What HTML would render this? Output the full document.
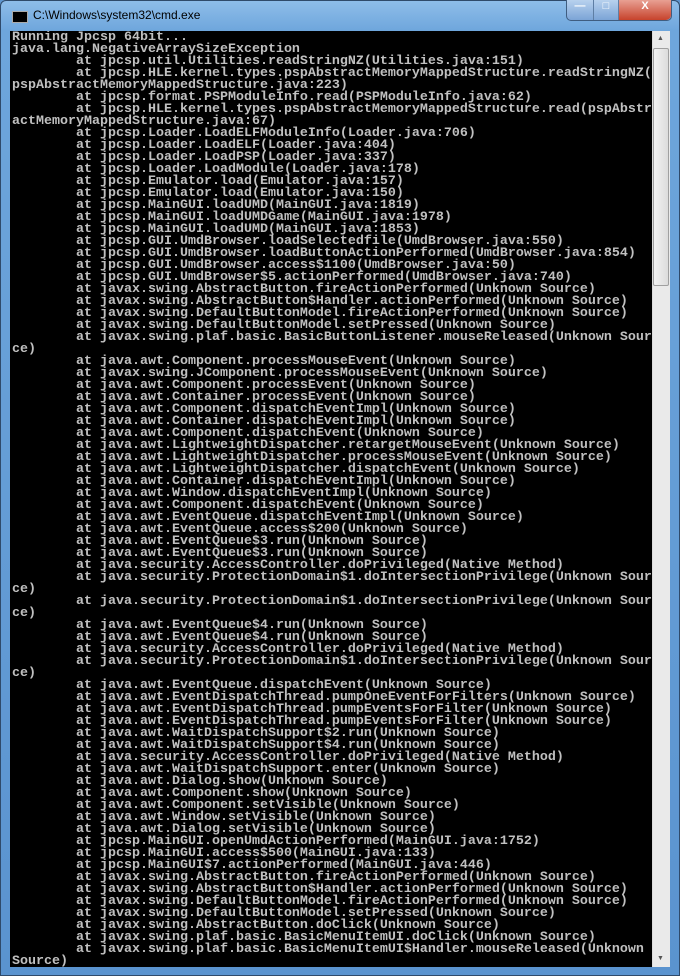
<!DOCTYPE html>
<html><head><style>
*{margin:0;padding:0}
body{width:680px;height:976px;overflow:hidden;background:#5f96cf;position:relative;font-family:"Liberation Sans",sans-serif}
#frame{position:absolute;left:0;top:0;width:678px;height:974px;border:1px solid #2f4a6a;border-radius:6px 6px 0 0;background:linear-gradient(180deg,#8ebde9 0,#6ea6dc 30px,#5a93cf 100%)}
#title{position:absolute;left:33px;top:8px;font-size:12px;color:#000}
#icon{position:absolute;left:12px;top:11px;width:14px;height:10px;background:#000;border:1px solid #aaa}
#btns{position:absolute;left:566px;top:0;width:104px;height:20px;border:1px solid #3f5d80;border-top:none;border-radius:0 0 5px 5px;background:linear-gradient(#b7d1ee,#7ba4d6);display:flex}
#btns div{height:20px;border-right:1px solid #5e7ea4;text-align:center;font-size:11px;font-weight:bold;color:#fff}
#close{background:linear-gradient(#e8a093,#c7432c);border-radius:0 0 5px 0}
#con{position:absolute;left:10px;top:31px;width:642px;height:936px;background:#000;overflow:hidden}
pre{position:absolute;left:2px;top:1px;font-family:"Liberation Mono",monospace;font-size:13.33px;font-weight:bold;line-height:12px;color:#c0c0c0;white-space:pre}
#sb{position:absolute;left:652px;top:31px;width:17px;height:936px;background:#eaeaea;border-left:1px solid #ddd}
#thumb{position:absolute;left:653px;top:48px;width:14px;height:236px;background:linear-gradient(90deg,#f2f2f2,#dcdcdc);border:1px solid #a0a0a0;border-radius:2px}
.ar{position:absolute;left:657px;font-size:7px;color:#555}
</style></head><body>
<div id="frame"></div>
<div id="icon"></div>
<div id="title">C:\Windows\system32\cmd.exe</div>
<div id="btns"><div style="width:26px">&#8212;</div><div style="width:24px">&#9633;</div><div id="close" style="width:52px;border:none">X</div></div>
<div id="con"><pre>Running Jpcsp 64bit...
java.lang.NegativeArraySizeException
        at jpcsp.util.Utilities.readStringNZ(Utilities.java:151)
        at jpcsp.HLE.kernel.types.pspAbstractMemoryMappedStructure.readStringNZ(
pspAbstractMemoryMappedStructure.java:223)
        at jpcsp.format.PSPModuleInfo.read(PSPModuleInfo.java:62)
        at jpcsp.HLE.kernel.types.pspAbstractMemoryMappedStructure.read(pspAbstr
actMemoryMappedStructure.java:67)
        at jpcsp.Loader.LoadELFModuleInfo(Loader.java:706)
        at jpcsp.Loader.LoadELF(Loader.java:404)
        at jpcsp.Loader.LoadPSP(Loader.java:337)
        at jpcsp.Loader.LoadModule(Loader.java:178)
        at jpcsp.Emulator.load(Emulator.java:157)
        at jpcsp.Emulator.load(Emulator.java:150)
        at jpcsp.MainGUI.loadUMD(MainGUI.java:1819)
        at jpcsp.MainGUI.loadUMDGame(MainGUI.java:1978)
        at jpcsp.MainGUI.loadUMD(MainGUI.java:1853)
        at jpcsp.GUI.UmdBrowser.loadSelectedfile(UmdBrowser.java:550)
        at jpcsp.GUI.UmdBrowser.loadButtonActionPerformed(UmdBrowser.java:854)
        at jpcsp.GUI.UmdBrowser.access$1100(UmdBrowser.java:50)
        at jpcsp.GUI.UmdBrowser$5.actionPerformed(UmdBrowser.java:740)
        at javax.swing.AbstractButton.fireActionPerformed(Unknown Source)
        at javax.swing.AbstractButton$Handler.actionPerformed(Unknown Source)
        at javax.swing.DefaultButtonModel.fireActionPerformed(Unknown Source)
        at javax.swing.DefaultButtonModel.setPressed(Unknown Source)
        at javax.swing.plaf.basic.BasicButtonListener.mouseReleased(Unknown Sour
ce)
        at java.awt.Component.processMouseEvent(Unknown Source)
        at javax.swing.JComponent.processMouseEvent(Unknown Source)
        at java.awt.Component.processEvent(Unknown Source)
        at java.awt.Container.processEvent(Unknown Source)
        at java.awt.Component.dispatchEventImpl(Unknown Source)
        at java.awt.Container.dispatchEventImpl(Unknown Source)
        at java.awt.Component.dispatchEvent(Unknown Source)
        at java.awt.LightweightDispatcher.retargetMouseEvent(Unknown Source)
        at java.awt.LightweightDispatcher.processMouseEvent(Unknown Source)
        at java.awt.LightweightDispatcher.dispatchEvent(Unknown Source)
        at java.awt.Container.dispatchEventImpl(Unknown Source)
        at java.awt.Window.dispatchEventImpl(Unknown Source)
        at java.awt.Component.dispatchEvent(Unknown Source)
        at java.awt.EventQueue.dispatchEventImpl(Unknown Source)
        at java.awt.EventQueue.access$200(Unknown Source)
        at java.awt.EventQueue$3.run(Unknown Source)
        at java.awt.EventQueue$3.run(Unknown Source)
        at java.security.AccessController.doPrivileged(Native Method)
        at java.security.ProtectionDomain$1.doIntersectionPrivilege(Unknown Sour
ce)
        at java.security.ProtectionDomain$1.doIntersectionPrivilege(Unknown Sour
ce)
        at java.awt.EventQueue$4.run(Unknown Source)
        at java.awt.EventQueue$4.run(Unknown Source)
        at java.security.AccessController.doPrivileged(Native Method)
        at java.security.ProtectionDomain$1.doIntersectionPrivilege(Unknown Sour
ce)
        at java.awt.EventQueue.dispatchEvent(Unknown Source)
        at java.awt.EventDispatchThread.pumpOneEventForFilters(Unknown Source)
        at java.awt.EventDispatchThread.pumpEventsForFilter(Unknown Source)
        at java.awt.EventDispatchThread.pumpEventsForFilter(Unknown Source)
        at java.awt.WaitDispatchSupport$2.run(Unknown Source)
        at java.awt.WaitDispatchSupport$4.run(Unknown Source)
        at java.security.AccessController.doPrivileged(Native Method)
        at java.awt.WaitDispatchSupport.enter(Unknown Source)
        at java.awt.Dialog.show(Unknown Source)
        at java.awt.Component.show(Unknown Source)
        at java.awt.Component.setVisible(Unknown Source)
        at java.awt.Window.setVisible(Unknown Source)
        at java.awt.Dialog.setVisible(Unknown Source)
        at jpcsp.MainGUI.openUmdActionPerformed(MainGUI.java:1752)
        at jpcsp.MainGUI.access$500(MainGUI.java:133)
        at jpcsp.MainGUI$7.actionPerformed(MainGUI.java:446)
        at javax.swing.AbstractButton.fireActionPerformed(Unknown Source)
        at javax.swing.AbstractButton$Handler.actionPerformed(Unknown Source)
        at javax.swing.DefaultButtonModel.fireActionPerformed(Unknown Source)
        at javax.swing.DefaultButtonModel.setPressed(Unknown Source)
        at javax.swing.AbstractButton.doClick(Unknown Source)
        at javax.swing.plaf.basic.BasicMenuItemUI.doClick(Unknown Source)
        at javax.swing.plaf.basic.BasicMenuItemUI$Handler.mouseReleased(Unknown
Source)</pre></div>
<div id="sb"></div>
<div id="thumb"></div>
<div class="ar" style="top:35px">&#9650;</div>
<div class="ar" style="top:955px">&#9660;</div>
</body></html>
